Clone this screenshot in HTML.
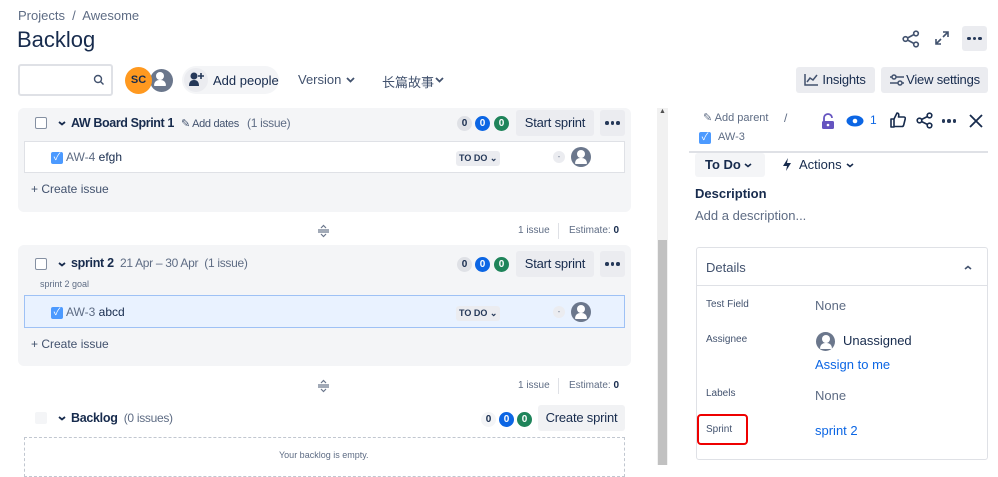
<!DOCTYPE html>
<html><head><meta charset="utf-8"><style>
*{box-sizing:border-box;margin:0;padding:0}
body{width:998px;height:465px;overflow:hidden;background:#fff;font-family:"Liberation Sans","Noto Sans CJK SC",sans-serif;color:#172b4d;position:relative}
.a{position:absolute;white-space:nowrap}
.g{color:#5e6c84}
.cb{position:absolute;width:12px;height:12px;border:1.5px solid #8590a2;border-radius:2px;background:#fff}
.chk{position:absolute;width:12px;height:12px;background:#4c9aff;border-radius:2px;color:#fff;font-size:10px;line-height:12px;text-align:center}
.btn{position:absolute;background:#ebecf0;border-radius:3px;font-size:13px;text-align:center;letter-spacing:-0.2px}
.pill{position:absolute;width:15px;height:15px;border-radius:8px;font-size:10px;line-height:15px;text-align:center;font-weight:bold}
.td{position:absolute;background:#ebecf0;border-radius:3px;font-size:9px;font-weight:bold;padding:2px 3px;color:#253858}
.av{position:absolute;width:20px;height:20px;border-radius:50%;background:#6b778c}
.av:before{content:"";position:absolute;left:6px;top:3px;width:8px;height:8px;border-radius:50%;background:#fff}
.av:after{content:"";position:absolute;left:4px;top:11px;width:12px;height:6px;border-radius:6px 6px 1px 1px;background:#fff}
.dot{position:absolute;width:12px;height:12px;border-radius:50%;background:#ebecf0;font-size:8px;text-align:center;line-height:12px;color:#6b778c}
.dots{position:absolute;display:flex;gap:2px;justify-content:center;align-items:center}
.dots i{width:3.5px;height:3.5px;border-radius:50%;background:#253858;display:block}
</style></head><body>
<div class="a g" style="left:18px;top:8px;font-size:13px">Projects &nbsp;/&nbsp; Awesome</div>
<div class="a" style="left:17px;top:27px;font-size:22px">Backlog</div>
<div class="a" style="left:18px;top:64px;width:95px;height:32px;border:2px solid #dfe1e6;border-radius:3px"></div>
<svg class="a" style="left:93px;top:74px" width="12" height="12"><circle cx="5" cy="5" r="3.5" fill="none" stroke="#42526e" stroke-width="1.4"/><line x1="7.5" y1="7.5" x2="10.5" y2="10.5" stroke="#42526e" stroke-width="1.4"/></svg>
<div class="a" style="left:148px;top:67px;width:27px;height:27px;border-radius:50%;background:#fff"><div class="av" style="left:2px;top:2px;width:23px;height:23px;background:#6b778c"></div></div>
<div class="a" style="left:125px;top:67px;width:27px;height:27px;border-radius:50%;background:#ff991f;color:#172b4d;font-size:11px;font-weight:bold;text-align:center;line-height:27px">SC</div>
<div class="a" style="left:182px;top:66px;width:97px;height:28px;border-radius:14px;background:#f4f5f7"></div>
<div class="a" style="left:184px;top:68px;width:24px;height:24px;border-radius:12px;background:#ebecf0"></div>
<svg class="a" style="left:188px;top:71px" width="17" height="17"><circle cx="6" cy="5" r="3.5" fill="#253858"/><path d="M1 15 Q1 9 6 9 Q11 9 11 15Z" fill="#253858"/><path d="M13 2v6M10 5h6" stroke="#253858" stroke-width="1.6"/></svg>
<div class="a" style="left:213px;top:73px;font-size:13px">Add people</div>
<div class="a" style="left:298px;top:72px;font-size:13px;color:#42526e">Version</div>
<svg class="a" style="left:346px;top:77px" width="9" height="6"><path d="M1 1l3.5 3.5L8 1" fill="none" stroke="#42526e" stroke-width="1.8"/></svg>
<div class="a" style="left:382px;top:72px;font-size:13px;color:#42526e">长篇故事</div>
<svg class="a" style="left:435px;top:77px" width="9" height="6"><path d="M1 1l3.5 3.5L8 1" fill="none" stroke="#42526e" stroke-width="1.8"/></svg>
<svg class="a" style="left:902px;top:30px" width="18" height="18"><g fill="none" stroke="#42526e" stroke-width="1.6"><circle cx="14" cy="3.5" r="2.3"/><circle cx="3.5" cy="9" r="2.3"/><circle cx="14" cy="14.5" r="2.3"/><path d="M5.5 8L12 4.5M5.5 10L12 13.5"/></g></svg>
<svg class="a" style="left:934px;top:30px" width="16" height="16"><g fill="none" stroke="#42526e" stroke-width="1.6"><path d="M9 2h5v5M14 2L9 7M7 14H2V9M2 14l5-5"/></g></svg>
<div class="a" style="left:962px;top:26px;width:25px;height:25px;background:#ebecf0;border-radius:3px"></div>
<div class="dots" style="left:962px;top:26px;width:25px;height:25px"><i></i><i></i><i></i></div>
<div class="btn" style="left:796px;top:67px;width:79px;height:26px;line-height:26px">&nbsp;&nbsp;&nbsp;&nbsp;&nbsp;Insights</div>
<svg class="a" style="left:804px;top:73px" width="15" height="13"><path d="M1 1v11h13M3 9l3-4 3 2 4-5" fill="none" stroke="#42526e" stroke-width="1.5"/></svg>
<div class="btn" style="left:881px;top:67px;width:107px;height:26px;line-height:26px">&nbsp;&nbsp;&nbsp;&nbsp;&nbsp;View settings</div>
<svg class="a" style="left:889px;top:73px" width="16" height="14"><g fill="none" stroke="#42526e" stroke-width="1.5"><path d="M1 4h14M1 10h14"/><circle cx="5" cy="4" r="2" fill="#ebecf0"/><circle cx="11" cy="10" r="2" fill="#ebecf0"/></g></svg>

<!-- sprint 1 -->
<div class="a" style="left:18px;top:108px;width:613px;height:104px;background:#f4f5f7;border-radius:6px"></div>
<div class="cb" style="left:35px;top:117px"></div>
<svg class="a" style="left:58px;top:121px" width="8" height="5"><path d="M1 1l3 2.5L7 1" fill="none" stroke="#172b4d" stroke-width="1.8"/></svg>
<div class="a" style="left:71px;top:116px;font-size:12.5px;font-weight:bold;letter-spacing:-0.4px">AW Board Sprint 1</div>
<div class="a" style="left:181px;top:117px;font-size:11px;color:#42526e;letter-spacing:-0.3px">✎ Add dates</div>
<div class="a g" style="left:247px;top:116px;font-size:12px;letter-spacing:-0.3px">(1 issue)</div>
<div class="pill" style="left:457px;top:116px;background:#dfe1e6;color:#172b4d">0</div>
<div class="pill" style="left:475px;top:116px;background:#0c66e4;color:#fff">0</div>
<div class="pill" style="left:494px;top:116px;background:#1f845a;color:#fff">0</div>
<div class="btn" style="left:516px;top:110px;width:78px;height:26px;line-height:26px">Start sprint</div>
<div class="btn" style="left:600px;top:110px;width:25px;height:26px"></div>
<div class="dots" style="left:600px;top:110px;width:25px;height:26px"><i></i><i></i><i></i></div>
<div class="a" style="left:24px;top:141px;width:601px;height:32px;background:#fff;border:1px solid #dfe1e6"></div>
<div class="chk" style="left:51px;top:152px">✓</div>
<div class="a" style="left:66px;top:150px;font-size:12px"><span class="g">AW-4</span> efgh</div>
<div class="td" style="left:456px;top:151px">TO DO ⌄</div>
<div class="dot" style="left:553px;top:151px">-</div>
<div class="av" style="left:571px;top:147px"></div>
<div class="a" style="left:31px;top:182px;font-size:12px;color:#42526e">+ Create issue</div>
<svg class="a" style="left:317px;top:224px" width="13" height="14"><path d="M4 4l2.5-2.5L9 4M4 10l2.5 2.5L9 10M1 6h11M1 8h11" fill="none" stroke="#6b778c" stroke-width="1.2"/></svg>
<div class="a g" style="left:518px;top:225px;font-size:10px">1 issue</div>
<div class="a" style="left:558px;top:223px;width:1px;height:16px;background:#dfe1e6"></div>
<div class="a g" style="left:569px;top:225px;font-size:10px">Estimate: <b style="color:#172b4d">0</b></div>

<!-- sprint 2 -->
<div class="a" style="left:18px;top:245px;width:613px;height:121px;background:#f4f5f7;border-radius:6px"></div>
<div class="cb" style="left:35px;top:258px"></div>
<svg class="a" style="left:58px;top:262px" width="8" height="5"><path d="M1 1l3 2.5L7 1" fill="none" stroke="#172b4d" stroke-width="1.8"/></svg>
<div class="a" style="left:71px;top:256px;font-size:12.5px;font-weight:bold;letter-spacing:-0.3px">sprint 2 <span class="g" style="font-weight:normal;font-size:12px">&nbsp;21 Apr – 30 Apr &nbsp;(1 issue)</span></div>
<div class="a g" style="left:40px;top:279px;font-size:9px">sprint 2 goal</div>
<div class="pill" style="left:457px;top:257px;background:#dfe1e6;color:#172b4d">0</div>
<div class="pill" style="left:475px;top:257px;background:#0c66e4;color:#fff">0</div>
<div class="pill" style="left:494px;top:257px;background:#1f845a;color:#fff">0</div>
<div class="btn" style="left:516px;top:251px;width:78px;height:26px;line-height:26px">Start sprint</div>
<div class="btn" style="left:600px;top:251px;width:25px;height:26px"></div>
<div class="dots" style="left:600px;top:251px;width:25px;height:26px"><i></i><i></i><i></i></div>
<div class="a" style="left:24px;top:295px;width:601px;height:33px;background:#e9f2ff;border:1px solid #9ec1f5"></div>
<div class="chk" style="left:51px;top:307px">✓</div>
<div class="a" style="left:66px;top:305px;font-size:12px"><span class="g">AW-3</span> abcd</div>
<div class="td" style="left:456px;top:306px">TO DO ⌄</div>
<div class="dot" style="left:553px;top:306px">-</div>
<div class="av" style="left:571px;top:302px"></div>
<div class="a" style="left:31px;top:337px;font-size:12px;color:#42526e">+ Create issue</div>
<svg class="a" style="left:317px;top:379px" width="13" height="14"><path d="M4 4l2.5-2.5L9 4M4 10l2.5 2.5L9 10M1 6h11M1 8h11" fill="none" stroke="#6b778c" stroke-width="1.2"/></svg>
<div class="a g" style="left:518px;top:380px;font-size:10px">1 issue</div>
<div class="a" style="left:558px;top:378px;width:1px;height:16px;background:#dfe1e6"></div>
<div class="a g" style="left:569px;top:380px;font-size:10px">Estimate: <b style="color:#172b4d">0</b></div>

<!-- backlog -->
<div class="a" style="left:35px;top:412px;width:12px;height:12px;background:#f4f5f7;border-radius:2px"></div>
<svg class="a" style="left:58px;top:416px" width="8" height="5"><path d="M1 1l3 2.5L7 1" fill="none" stroke="#172b4d" stroke-width="1.8"/></svg>
<div class="a" style="left:71px;top:411px;font-size:12.5px;font-weight:bold;letter-spacing:-0.3px">Backlog <span class="g" style="font-weight:normal;font-size:12px">&nbsp;(0 issues)</span></div>
<div class="pill" style="left:481px;top:412px;background:#f4f5f7;color:#172b4d">0</div>
<div class="pill" style="left:499px;top:412px;background:#0c66e4;color:#fff">0</div>
<div class="pill" style="left:517px;top:412px;background:#1f845a;color:#fff">0</div>
<div class="btn" style="left:538px;top:405px;width:87px;height:26px;line-height:26px;background:#f1f2f4">Create sprint</div>
<div class="a" style="left:24px;top:437px;width:601px;height:40px;border:1px dashed #c1c7d0"></div>
<div class="a g" style="left:279px;top:450px;font-size:9px">Your backlog is empty.</div>

<!-- scrollbar -->
<div class="a" style="left:657px;top:108px;width:11px;height:357px;background:#f1f1f1"></div>
<div class="a" style="left:658px;top:240px;width:9px;height:225px;background:#c1c1c1"></div>
<div class="a" style="left:659px;top:108px;font-size:7px;color:#505050">▲</div>

<!-- right panel -->
<div class="a" style="left:703px;top:111px;font-size:11px;color:#5e6c84">✎ Add parent</div>
<div class="a g" style="left:784px;top:111px;font-size:12px">/</div>
<div class="chk" style="left:699px;top:132px">✓</div>
<div class="a g" style="left:718px;top:131px;font-size:11px">AW-3</div>
<svg class="a" style="left:821px;top:113px" width="14" height="17"><path d="M3 8V5a4 4 0 0 1 8 0" fill="none" stroke="#6554c0" stroke-width="1.8"/><rect x="1" y="8" width="12" height="8" rx="1.5" fill="#6554c0"/><circle cx="7" cy="12" r="1.3" fill="#fff"/></svg>
<svg class="a" style="left:846px;top:115px" width="18" height="12"><ellipse cx="9" cy="6" rx="8.5" ry="5.5" fill="#0c66e4"/><circle cx="9" cy="6" r="2.3" fill="#fff"/></svg>
<div class="a" style="left:870px;top:113px;font-size:12px;color:#0c66e4">1</div>
<svg class="a" style="left:890px;top:112px" width="16" height="16"><path d="M1 7h3v8H1zM4 7l3-6c2 0 2 2 1.5 4H14c1 0 1.5 1 1.2 2l-1.5 6c-.2.8-.8 1.5-1.7 1.5H4" fill="none" stroke="#172b4d" stroke-width="1.6" stroke-linejoin="round"/></svg>
<svg class="a" style="left:916px;top:112px" width="17" height="17"><g fill="none" stroke="#172b4d" stroke-width="1.6"><circle cx="13.5" cy="3.5" r="2.3"/><circle cx="3.5" cy="8.5" r="2.3"/><circle cx="13.5" cy="13.5" r="2.3"/><path d="M5.5 7.5L11.5 4.5M5.5 9.5L11.5 12.5"/></g></svg>
<div class="dots" style="left:941px;top:114px;width:16px;height:14px"><i></i><i></i><i></i></div>
<svg class="a" style="left:969px;top:114px" width="14" height="14"><path d="M1 1l12 12M13 1L1 13" stroke="#172b4d" stroke-width="1.8"/></svg>
<div class="a" style="left:689px;top:151px;width:299px;height:2px;background:#dfe1e6"></div>
<div class="a" style="left:695px;top:153px;width:70px;height:24px;background:#f4f5f7;border-radius:3px"></div>
<div class="a" style="left:705px;top:157px;font-size:13px;font-weight:bold;color:#172b4d">To Do</div>
<svg class="a" style="left:744px;top:163px" width="8" height="5"><path d="M1 1l3 2.5L7 1" fill="none" stroke="#172b4d" stroke-width="1.6"/></svg>
<svg class="a" style="left:781px;top:157px" width="12" height="15"><path d="M7 1L2 9h4l-1 5 5-8H6z" fill="#172b4d"/></svg>
<div class="a" style="left:799px;top:157px;font-size:13px;color:#172b4d">Actions</div>
<svg class="a" style="left:846px;top:163px" width="8" height="5"><path d="M1 1l3 2.5L7 1" fill="none" stroke="#172b4d" stroke-width="1.6"/></svg>
<div class="a" style="left:695px;top:186px;font-size:13px;font-weight:bold">Description</div>
<div class="a g" style="left:695px;top:208px;font-size:13px">Add a description...</div>
<div class="a" style="left:696px;top:247px;width:292px;height:213px;border:1px solid #dfe1e6;border-radius:3px"></div>
<div class="a" style="left:697px;top:285px;width:290px;height:1px;background:#dfe1e6"></div>
<div class="a" style="left:706px;top:260px;font-size:13px;color:#42526e">Details</div>
<svg class="a" style="left:964px;top:265px" width="8" height="5"><path d="M1 4l3-2.5L7 4" fill="none" stroke="#42526e" stroke-width="1.6"/></svg>
<div class="a" style="left:706px;top:299px;font-size:10px;color:#42526e">Test Field</div>
<div class="a g" style="left:815px;top:298px;font-size:13px">None</div>
<div class="a" style="left:706px;top:334px;font-size:10px;color:#42526e">Assignee</div>
<div class="av" style="left:816px;top:332px;width:19px;height:19px"></div>
<div class="a" style="left:843px;top:333px;font-size:13px">Unassigned</div>
<div class="a" style="left:815px;top:357px;font-size:13px;color:#0c66e4">Assign to me</div>
<div class="a" style="left:706px;top:388px;font-size:10px;color:#42526e">Labels</div>
<div class="a g" style="left:815px;top:388px;font-size:13px">None</div>
<div class="a" style="left:697px;top:414px;width:51px;height:31px;border:2px solid #e00;border-radius:4px"></div>
<div class="a" style="left:706px;top:424px;font-size:10px;color:#42526e">Sprint</div>
<div class="a" style="left:815px;top:423px;font-size:13px;color:#0c66e4">sprint 2</div>
</body></html>
